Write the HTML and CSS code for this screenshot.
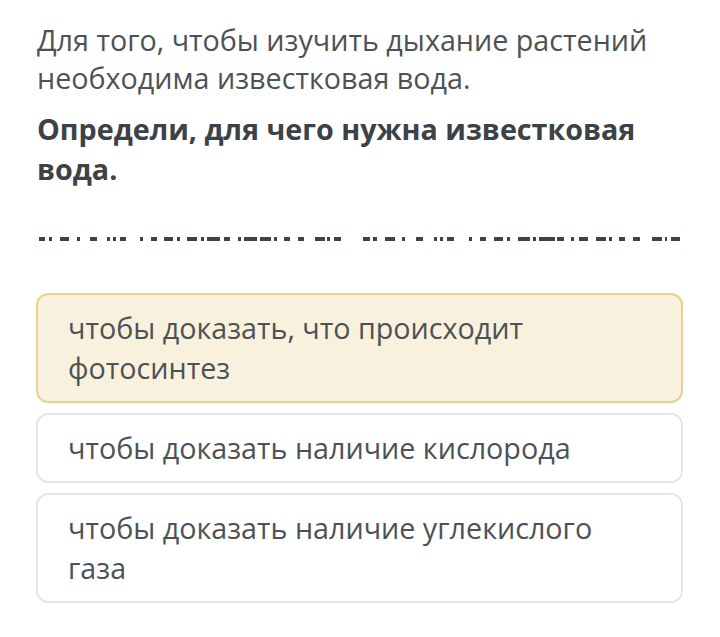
FILE: index.html
```html
<!DOCTYPE html>
<html lang="ru">
<head>
    <meta charset="UTF-8">
    <meta name="viewport" content="width=device-width, initial-scale=1.0">
    <title>Известковая вода</title>
    <link rel="stylesheet" href="styles.css">
</head>
<body>
    <div class="container">
        <p class="intro">Для того, чтобы изучить дыхание растений необходима известковая вода.</p>
        <h2 class="question">Определи, для чего нужна известковая вода.</h2>

        <div class="blank">
            <svg width="648" height="4" viewBox="0 0 648 4">
                <g fill="#3d4448">
                    <rect x="2" y="0" width="6" height="4"/><rect x="12" y="0" width="3" height="4"/>
                    <rect x="23" y="0" width="9" height="4"/><rect x="40" y="0" width="3" height="4"/>
                    <rect x="53" y="0" width="7" height="4"/><rect x="70" y="0" width="3" height="4"/>
                    <rect x="76" y="0" width="3" height="4"/><rect x="83" y="0" width="6" height="4"/>
                    <rect x="103" y="0" width="3" height="4"/><rect x="114" y="0" width="6" height="4"/>
                    <rect x="127" y="0" width="9" height="4"/><rect x="140" y="0" width="3" height="4"/>
                    <rect x="150" y="0" width="10" height="4"/><rect x="164" y="0" width="3" height="4"/>
                    <rect x="170" y="0" width="13" height="4"/><rect x="187" y="0" width="6" height="4"/>
                    <rect x="201" y="0" width="3" height="4"/><rect x="207" y="0" width="13" height="4"/>
                    <rect x="223" y="0" width="11" height="4"/><rect x="237" y="0" width="3" height="4"/>
                    <rect x="247" y="0" width="6" height="4"/><rect x="261" y="0" width="6" height="4"/>
                    <rect x="278" y="0" width="10" height="4"/><rect x="290" y="0" width="3" height="4"/>
                    <rect x="297" y="0" width="7" height="4"/>

                    <rect x="326" y="0" width="7" height="4"/><rect x="336" y="0" width="4" height="4"/>
                    <rect x="348" y="0" width="10" height="4"/><rect x="365" y="0" width="3" height="4"/>
                    <rect x="379" y="0" width="7" height="4"/><rect x="397" y="0" width="3" height="4"/>
                    <rect x="403" y="0" width="3" height="4"/><rect x="410" y="0" width="7" height="4"/>
                    <rect x="432" y="0" width="3" height="4"/><rect x="443" y="0" width="6" height="4"/>
                    <rect x="457" y="0" width="9" height="4"/><rect x="470" y="0" width="3" height="4"/>
                    <rect x="481" y="0" width="12" height="4"/><rect x="496" y="0" width="3" height="4"/>
                    <rect x="502" y="0" width="16" height="4"/><rect x="520" y="0" width="7" height="4"/>
                    <rect x="534" y="0" width="3" height="4"/><rect x="542" y="0" width="9" height="4"/>
                    <rect x="559" y="0" width="10" height="4"/><rect x="572" y="0" width="3" height="4"/>
                    <rect x="582" y="0" width="6" height="4"/><rect x="596" y="0" width="7" height="4"/>
                    <rect x="615" y="0" width="10" height="4"/><rect x="628" y="0" width="2" height="4"/>
                    <rect x="634" y="0" width="9" height="4"/>
                </g>
            </svg>
        </div>

        <div class="options">
            <div class="option selected">чтобы доказать, что происходит фотосинтез</div>
            <div class="option">чтобы доказать наличие кислорода</div>
            <div class="option">чтобы доказать наличие углекислого газа</div>
        </div>
    </div>
</body>
</html>
```

FILE: styles.css
```css
body {
    font-family: "Open Sans", "Noto Sans", sans-serif;
    margin: 0;
    padding: 0;
    background: #fff;
    color: #4a4f53;
}

.container {
    padding: 21px 37px 0 37px;
}

.intro {
    margin: 0;
    font-size: 28.7px;
    line-height: 38px;
    color: #4d5256;
}

.question {
    margin: 12px 0 0 0;
    font-size: 28.7px;
    line-height: 40px;
    font-weight: bold;
    color: #3c4247;
}

.blank {
    margin-top: 46px;
    height: 4px;
    line-height: 0;
}

.options {
    margin-top: 54px;
    margin-left: -1px;
    width: 647px;
    display: flex;
    flex-direction: column;
    gap: 10px;
}

.option {
    border: 2px solid #e4e7e8;
    border-radius: 12px;
    padding: 13px 44px 13px 30px;
    font-size: 28.7px;
    line-height: 40px;
    color: #4d5256;
    background: #fff;
}

.option.selected {
    background: #f8f1dd;
    border-color: #e9d290;
}
```
